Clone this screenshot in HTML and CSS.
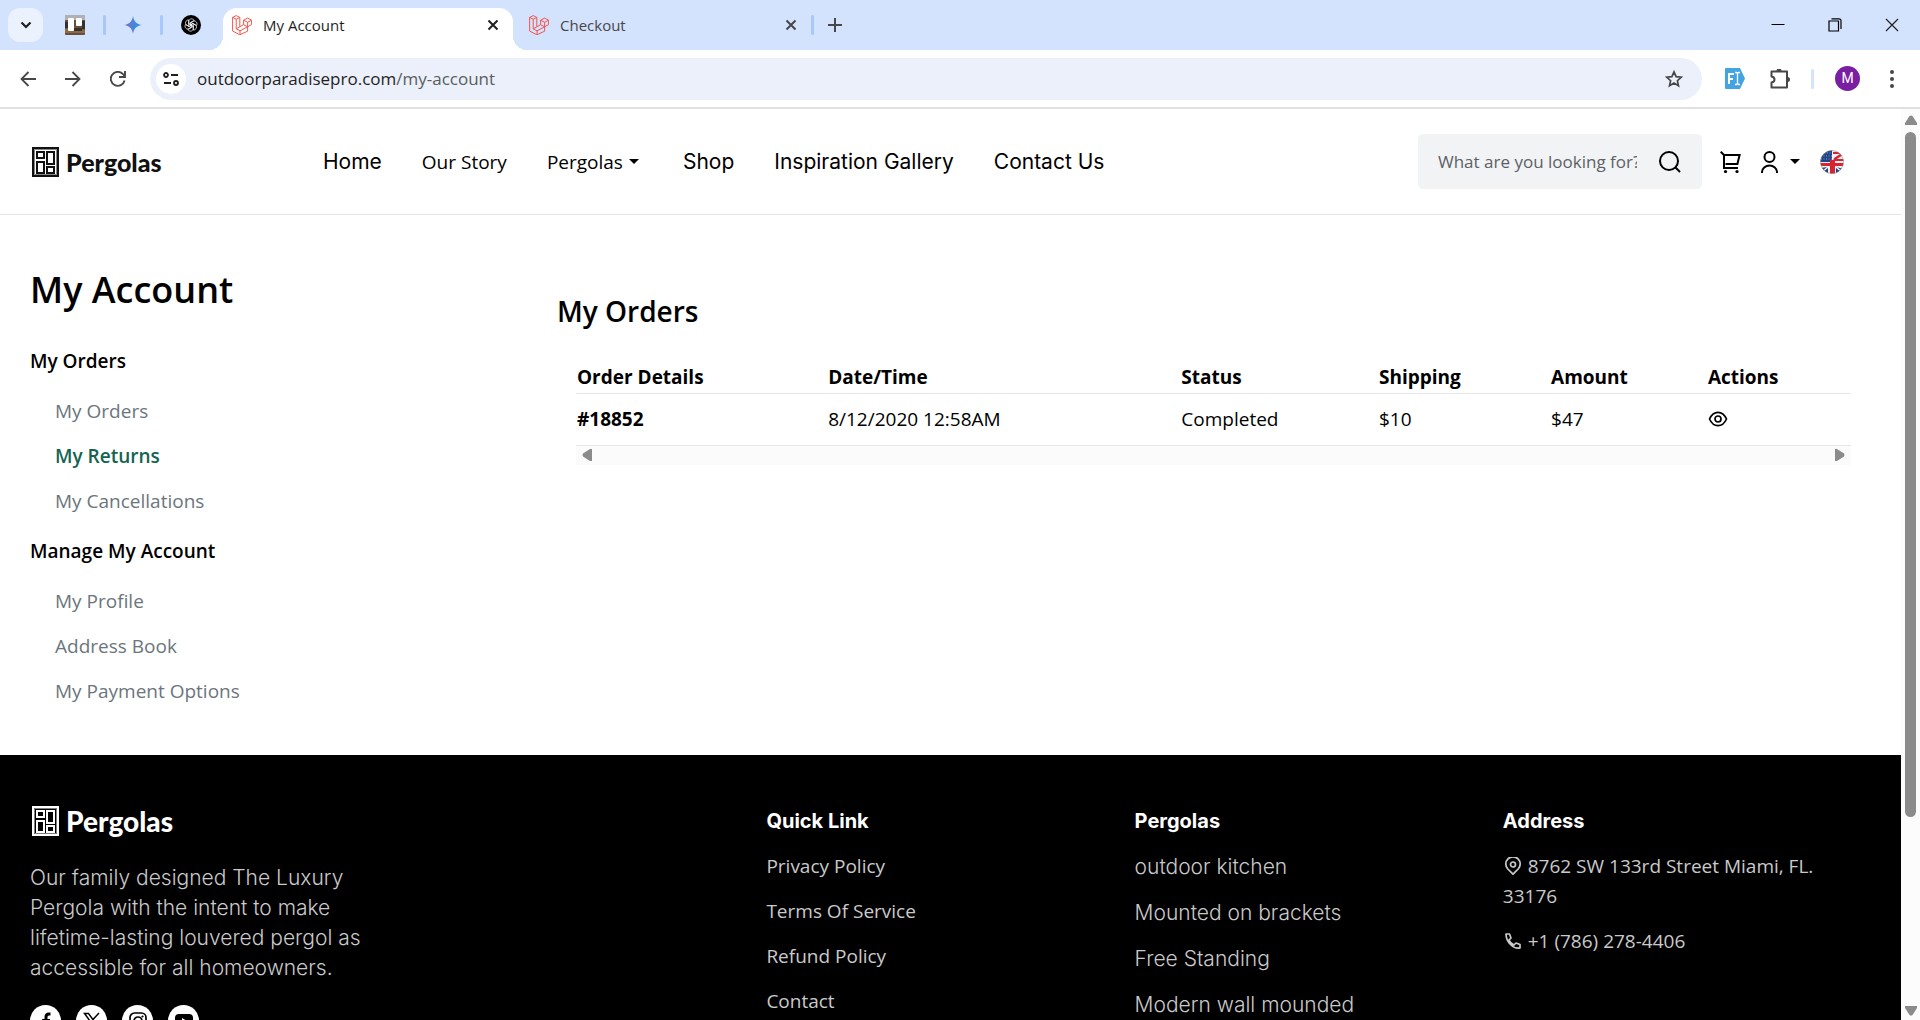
FILE: index.html
```html
<!DOCTYPE html>
<html lang="en">
<head>
    <meta charset="UTF-8">
    <title>My Account</title>
    <meta name="viewport" content="width=device-width, initial-scale=1.0">
    <link rel="stylesheet" href="styles.css">
</head>
<body>
    <!-- shared icon shapes -->
    <svg class="sprite" aria-hidden="true">
        <symbol id="laravel" viewBox="0 0 20 20">
            <path fill="none" stroke="#f5554c" stroke-width="1" stroke-linejoin="round" d="M.6 2.4 4.2.6l3.6 1.8v9.4l3.8-2.1V5.2l4-2.1 4 2.1v4.4l-4 2.2v4.4l-7.8 3.6L.6 16zM.6 2.4l3.6 1.8 3.6-1.8M4.2 4.2v9.6l3.6-2M4.2 13.8l3.8 2 7.6-4M8 15.8v4M11.6 5.2l4 2.1 4-2.1M15.6 7.3v4.5M11.6 9.7l4 2.1"/>
        </symbol>
        <symbol id="close" viewBox="0 0 12 12">
            <path fill="none" stroke="currentColor" stroke-width="2" d="m1.5 1.5 9 9m0-9-9 9"/>
        </symbol>
        <symbol id="pergola" viewBox="0 0 27 30">
            <path fill="none" stroke="currentColor" stroke-width="2" d="M1 1h25v28H1zM5 5h7v6H5zM15 5h7v12h-7zM5 15h7v11H5zM15 20h7v6h-7z"/>
            <path fill="none" stroke="currentColor" opacity=".5" d="M2.5 2.5h22v25h-22z"/>
        </symbol>
    </svg>

    <div class="tab-strip">
        <button class="tab-search" aria-label="Search tabs">
            <svg width="12" height="8" viewBox="0 0 12 8"><path fill="none" stroke="#1f1f1f" stroke-width="2.2" d="m1.5 1.5 4.500 4.500 4.500-4.500"/></svg>
        </button>
        <div class="pinned">
            <svg width="20" height="20" viewBox="0 0 20 20">
                <rect width="20" height="20" rx="1" fill="#64503c"/>
                <path fill="#aeb0b3" d="M0 0h20v5H0z"/>
                <path fill="#8d6a42" d="M0 14l8-2 12 3v3H0z"/>
                <path fill="#33302e" d="M0 7h3v6H0zM17 6h3v8h-3zM9 13h8v3H9z"/>
                <rect x="3" y="3" width="6" height="13" rx="1" fill="#fff"/>
                <rect x="11" y="3" width="6" height="8" rx="1" fill="#fff"/>
            </svg>
            <span class="divider"></span>
            <svg width="18" height="18" viewBox="0 0 18 18">
                <defs><linearGradient id="spark"><stop offset="0" stop-color="#9168c0"/><stop offset=".5" stop-color="#4b83d6"/><stop offset="1" stop-color="#1ba1e3"/></linearGradient></defs>
                <path fill="url(#spark)" d="M9 0c.6 5.2 3.8 8.4 9 9-5.2.6-8.4 3.8-9 9-.6-5.2-3.8-8.4-9-9 5.2-.6 8.4-3.8 9-9z"/>
            </svg>
            <span class="divider"></span>
            <svg width="20" height="20" viewBox="0 0 20 20">
                <circle cx="10" cy="10" r="10" fill="#000"/>
                <g fill="none" stroke="#fff" stroke-width="0.7">
                    <path id="petal" d="M7.800 11.400V6.600c0-3.200 4-3.600 5.400-1.200L9.500 7.600v3.400"/>
                    <use href="#petal" transform="rotate(60 10 10)"/>
                    <use href="#petal" transform="rotate(120 10 10)"/>
                    <use href="#petal" transform="rotate(180 10 10)"/>
                    <use href="#petal" transform="rotate(240 10 10)"/>
                    <use href="#petal" transform="rotate(300 10 10)"/>
                </g>
            </svg>
        </div>
        <div class="tab active">
            <svg width="20" height="20"><use href="#laravel"/></svg>
            <span>My Account</span>
            <button aria-label="Close tab"><svg width="12" height="12"><use href="#close"/></svg></button>
        </div>
        <div class="tab">
            <svg width="20" height="20"><use href="#laravel"/></svg>
            <span>Checkout</span>
            <button aria-label="Close tab"><svg width="12" height="12"><use href="#close"/></svg></button>
        </div>
        <span class="divider"></span>
        <button class="new-tab" aria-label="New tab">
            <svg width="14" height="14" viewBox="0 0 14 14"><path stroke="#474747" stroke-width="2" d="M7 0v14M0 7h14"/></svg>
        </button>
        <div class="window-buttons">
            <button aria-label="Minimize"><svg width="14" height="14" viewBox="0 0 14 14"><path stroke="#000" d="M.5 6.500h13"/></svg></button>
            <button aria-label="Restore"><svg width="14" height="14" viewBox="0 0 14 14"><path fill="none" stroke="#000" stroke-width="1.2" d="M1 3h9.500v10H1zM3.500.8H11q2 0 2 2V11"/></svg></button>
            <button aria-label="Close"><svg width="14" height="14" viewBox="0 0 14 14"><path stroke="#222" stroke-width="1.2" d="m1 1 12 12m0-12L1 13"/></svg></button>
        </div>
    </div>

    <div class="toolbar">
        <div class="history">
            <button aria-label="Back"><svg width="16" height="16" viewBox="0 0 16 16"><path fill="none" stroke="#474747" stroke-width="1.8" d="M16 8H2M8.500 1 1.500 8l7 7"/></svg></button>
            <button aria-label="Forward"><svg width="16" height="16" viewBox="0 0 16 16"><path fill="none" stroke="#474747" stroke-width="1.8" d="M0 8h14M7.500 1l7 7-7 7"/></svg></button>
            <button aria-label="Reload"><svg width="16" height="16" viewBox="0 0 16 16"><path fill="none" stroke="#474747" stroke-width="1.9" d="M14.600 9.500A7 7 0 1 1 13 3.200L14.800 5M15 0v6H9"/></svg></button>
        </div>
        <div class="address-bar">
            <span class="site-info">
                <svg width="16" height="14" viewBox="0 0 16 14"><g fill="none" stroke="#1f1f1f" stroke-width="1.8"><circle cx="3" cy="3" r="2"/><path d="M8 3h7M1 11h7"/><circle cx="13" cy="11" r="2"/></g></svg>
            </span>
            <span class="url">outdoorparadisepro.com<span>/my-account</span></span>
            <svg width="18" height="18" viewBox="0 0 18 18"><path fill="none" stroke="#474747" stroke-width="1.7" d="m9 1.900 2.100 4.800 5.200.5-3.900 3.500 1.100 5.100L9 13.100l-4.500 2.700 1.100-5.100L1.700 7.200l5.200-.5z"/></svg>
        </div>
        <div class="extensions">
            <svg width="20" height="21" viewBox="0 0 20 21">
                <path fill="#44a4e2" d="M1 0h14l5 10.500L15 21H1q-1 0-1-1V1q0-1 1-1z"/>
                <path fill="none" stroke="#fff" stroke-width="2" d="M4 16V6h5M4 11h4"/>
                <path fill="none" stroke="#fff" stroke-width="1.3" d="M10 4.500h1.500l1 1 1-1H15M12.500 5v11M10 16.500h1.500l1-1 1 1H15"/>
            </svg>
            <svg width="20" height="20" viewBox="0 0 20 20">
                <path fill="none" stroke="#474747" stroke-width="2" stroke-linejoin="round" d="M1.500 2.500h15.500v16H1.500v-5q3-.5 3-3t-3-3z"/>
                <path fill="#474747" d="M6.500 2a2.500 2.500 0 0 1 5 0zM17.500 8a2.500 2.500 0 0 1 0 5z"/>
            </svg>
            <span class="divider"></span>
            <span class="avatar">M</span>
            <svg width="4" height="18" viewBox="0 0 4 18"><g fill="#474747"><circle cx="2" cy="2" r="2"/><circle cx="2" cy="9" r="2"/><circle cx="2" cy="16" r="2"/></g></svg>
        </div>
    </div>

    <div class="viewport">
        <div class="page">
            <header class="site-header">
                <a href="#" class="logo">
                    <svg width="27" height="30"><use href="#pergola"/></svg>
                    <span>Pergolas</span>
                </a>
                <nav>
                    <a href="#" class="geo">Home</a>
                    <a href="#">Our Story</a>
                    <a href="#" class="dropdown">Pergolas</a>
                    <a href="#" class="geo">Shop</a>
                    <a href="#" class="geo">Inspiration Gallery</a>
                    <a href="#" class="geo">Contact Us</a>
                </nav>
                <form class="search">
                    <input type="text" placeholder="What are you looking for?" aria-label="Search products">
                    <button type="button" aria-label="Search">
                        <svg width="22" height="22" viewBox="0 0 22 22"><g fill="none" stroke="#000" stroke-width="2"><circle cx="10" cy="10" r="9"/><path d="m16.500 16.500 4.500 4.500"/></g></svg>
                    </button>
                </form>
                <div class="user-tools">
                    <a href="#" aria-label="Cart">
                        <svg width="21" height="22" viewBox="0 0 21 22"><path fill="none" stroke="#000" stroke-width="2" d="m.7.700 3.300 3.300M4 4h15.600l-2.200 9H5.500M4 3v14h14"/><circle cx="5.500" cy="20.500" r="1.600"/><circle cx="17" cy="20.500" r="1.600"/></svg>
                    </a>
                    <a href="#" class="dropdown" aria-label="Account">
                        <svg width="17" height="22" viewBox="0 0 17 22"><g fill="none" stroke="#000" stroke-width="2"><circle cx="8.500" cy="6" r="5"/><path d="M1 22v-1a7.500 6.500 0 0 1 15 0v1"/></g></svg>
                    </a>
                    <a href="#" class="lang" aria-label="English">
                        <svg width="24" height="24" viewBox="0 0 24 24">
                            <clipPath id="round"><circle cx="12" cy="12" r="11.500"/></clipPath>
                            <g clip-path="url(#round)">
                                <path fill="#f4f2f4" d="M0 0h24v24H0z"/>
                                <path fill="#1f4386" d="M0 0h12v12H0zM0 18l8-1v7H0zM16 17l8 2v5h-8z"/>
                                <path fill="#d7242f" d="M13 2h9v2h-9zM14 8l9-6v3l-6 4h7v2H13zM0 13h24v3H0zM10 10h5v14h-5z"/>
                                <path stroke="#f4f2f4" stroke-width="1.500" d="m1 23 7-6M16 17l7 6"/>
                                <path stroke="#aebfda" stroke-width=".8" stroke-dasharray="1 1.500" d="M2 3h10M1 6h11M1 9h11"/>
                            </g>
                            <circle cx="12" cy="12" r="11.500" fill="none" stroke="#777" opacity=".5"/>
                        </svg>
                    </a>
                </div>
            </header>

            <main>
                <aside>
                    <h1>My Account</h1>
                    <h3>My Orders</h3>
                    <ul>
                        <li><a href="#">My Orders</a></li>
                        <li><a href="#" class="current">My Returns</a></li>
                        <li><a href="#">My Cancellations</a></li>
                    </ul>
                    <h3>Manage My Account</h3>
                    <ul>
                        <li><a href="#">My Profile</a></li>
                        <li><a href="#">Address Book</a></li>
                        <li><a href="#">My Payment Options</a></li>
                    </ul>
                </aside>
                <section class="orders">
                    <h2>My Orders</h2>
                    <div class="table-wrap">
                        <table>
                            <thead>
                                <tr>
                                    <th>Order Details</th>
                                    <th>Date/Time</th>
                                    <th>Status</th>
                                    <th>Shipping</th>
                                    <th>Amount</th>
                                    <th>Actions</th>
                                </tr>
                            </thead>
                            <tbody>
                                <tr>
                                    <td><b>#18852</b></td>
                                    <td>8/12/2020 12:58AM</td>
                                    <td>Completed</td>
                                    <td>$10</td>
                                    <td>$47</td>
                                    <td><a href="#" aria-label="View order"><svg width="20" height="16" viewBox="0 0 20 16"><g fill="none" stroke="#000" stroke-width="1.7"><path d="M1.500 8C3.500 3.500 6.500 1.300 10 1.300S16.500 3.500 18.500 8c-2 4.500-5 6.700-8.500 6.700S3.500 12.500 1.500 8z"/><circle cx="10" cy="8" r="3"/></g></svg></a></td>
                                </tr>
                            </tbody>
                        </table>
                        <div class="h-scroll">
                            <svg width="10" height="12" viewBox="0 0 10 12"><path fill="#8b8b8b" d="M10 0v12H8L1 7.500Q0 6 1 4.500L8 0z"/></svg>
                            <svg width="10" height="12" viewBox="0 0 10 12"><path fill="#8b8b8b" d="M0 0v12h2l7-4.500Q10 6 9 4.500L2 0z"/></svg>
                        </div>
                    </div>
                </section>
            </main>

            <footer>
                <div class="about">
                    <a href="#" class="logo">
                        <svg width="27" height="30"><use href="#pergola"/></svg>
                        <span>Pergolas</span>
                    </a>
                    <p class="geo">Our family designed The Luxury<br>Pergola with the intent to make<br>lifetime-lasting louvered pergol as<br>accessible for all homeowners.</p>
                    <div class="social">
                        <a href="#" aria-label="Facebook"><svg width="18" height="18" viewBox="0 0 18 18"><path fill="none" stroke="#000" stroke-width="3" d="M13.500 2H12q-3 0-3 3v13M5 8.500h8"/></svg></a>
                        <a href="#" aria-label="X"><svg width="18" height="18" viewBox="0 0 18 18"><path fill="none" stroke="#000" stroke-width="1.5" d="M1.500 1.500h4l11 15h-4zM16 1l-6.500 7M7.500 10 2 17"/></svg></a>
                        <a href="#" aria-label="Instagram"><svg width="18" height="18" viewBox="0 0 18 18"><g fill="none" stroke="#000" stroke-width="1.7"><rect x="1" y="1" width="16" height="16" rx="4.500"/><circle cx="9" cy="9" r="4"/></g><circle cx="13.500" cy="4.500" r="1.100"/></svg></a>
                        <a href="#" aria-label="YouTube"><svg width="18" height="16" viewBox="0 0 18 16"><rect y="1" width="18" height="14" rx="4"/><path fill="#fff" d="m7 5 5 3-5 3z"/></svg></a>
                    </div>
                </div>
                <div class="links">
                    <h4>Quick Link</h4>
                    <a href="#">Privacy Policy</a>
                    <a href="#">Terms Of Service</a>
                    <a href="#">Refund Policy</a>
                    <a href="#">Contact</a>
                </div>
                <div class="links geo">
                    <h4>Pergolas</h4>
                    <a href="#">outdoor kitchen</a>
                    <a href="#">Mounted on brackets</a>
                    <a href="#">Free Standing</a>
                    <a href="#">Modern wall mounded</a>
                </div>
                <div class="links">
                    <h4>Address</h4>
                    <a href="#"><svg width="20" height="18" viewBox="0 0 20 18"><g fill="none" stroke="currentColor" stroke-width="1.7"><path d="M10 17.200 4.800 12a7.200 7.200 0 1 1 10.400 0z"/><circle cx="10" cy="7.500" r="2.500"/></g></svg> 8762 SW 133rd Street Miami, FL. 33176</a>
                    <a href="#"><svg width="20" height="18" viewBox="0 0 20 18"><path fill="none" stroke="currentColor" stroke-width="1.7" stroke-linejoin="round" d="M3 2h3.500l1.500 4-2 2q1.500 3.500 5 5l2-2 4 1.500V16q-5 1-9.500-3.500T3 2z"/></svg> +1 (786) 278-4406</a>
                </div>
            </footer>
        </div>
        <div class="v-scroll">
            <svg width="12" height="10" viewBox="0 0 12 10"><path fill="#8b8b8b" d="M0 10V8l4.500-7Q6 0 7.500 1L12 8v2z"/></svg>
            <div class="thumb"></div>
            <svg width="12" height="10" viewBox="0 0 12 10"><path fill="#8b8b8b" d="M0 0v2l4.500 7Q6 10 7.500 9L12 2V0z"/></svg>
        </div>
    </div>
</body>
</html>
```
FILE: styles.css
```css
* {
    margin: 0;
    padding: 0;
    box-sizing: border-box;
}

body {
    display: flex;
    flex-direction: column;
    height: 100vh;
    overflow: hidden;
    background: #fff;
    color: #000;
    font-family: "Open Sans", "Noto Sans", sans-serif;
    font-size: 19px;
    line-height: 30px;
}

a {
    color: inherit;
    text-decoration: none;
}

button {
    border: 0;
    background: none;
    color: inherit;
    font: inherit;
    cursor: pointer;
}

svg {
    display: block;
    flex-shrink: 0;
}

ul {
    list-style: none;
}

.sprite {
    position: absolute;
    width: 0;
    height: 0;
}

.geo {
    font-family: Inter, "Open Sans", sans-serif;
    font-size: 21px;
}

/* browser tabs */
.tab-strip {
    display: flex;
    align-items: center;
    height: 50px;
    flex-shrink: 0;
    padding-left: 8px;
    background: #d3e2fd;
    font-size: 15px;
}

.tab-search {
    display: grid;
    place-items: center;
    width: 35px;
    height: 34px;
    border-radius: 12px;
    background: #ebf2fe;
}

.divider {
    width: 3px;
    height: 20px;
    border-radius: 2px;
    background: #a8c7fa;
}

.pinned {
    display: flex;
    align-items: center;
    gap: 18px;
    padding: 0 22px;
}

.tab {
    display: flex;
    align-items: center;
    gap: 11px;
    width: 298px;
    height: 42px;
    padding: 0 12px 0 16px;
    color: #474747;
}

.tab span {
    flex: 1;
}

.tab button {
    padding: 2px;
}

.tab.active {
    position: relative;
    align-self: flex-end;
    width: 290px;
    padding-left: 9px;
    padding-bottom: 8px;
    border-radius: 14px 14px 0 0;
    background: #fff;
    color: #1f1f1f;
}

.tab.active::before,
.tab.active::after {
    content: "";
    position: absolute;
    bottom: 0;
    width: 14px;
    height: 14px;
}

.tab.active::before {
    right: 100%;
    background: radial-gradient(circle at 0 0, transparent 14px, #fff 14px);
}

.tab.active::after {
    left: 100%;
    background: radial-gradient(circle at 100% 0, transparent 14px, #fff 14px);
}

.new-tab {
    padding: 14px;
}

.window-buttons {
    display: flex;
    margin-left: auto;
}

.window-buttons button {
    display: grid;
    place-items: center;
    width: 57px;
    height: 48px;
}

/* address bar */
.toolbar {
    display: flex;
    align-items: center;
    flex-shrink: 0;
    height: 59px;
    padding: 0 26px 0 20px;
    border-bottom: 2px solid #e0e0e0;
    background: #fff;
}

.history {
    display: flex;
    gap: 29px;
    padding-right: 24px;
}

.address-bar {
    display: flex;
    align-items: center;
    flex: 1;
    height: 42px;
    padding: 0 19px 0 6px;
    border-radius: 21px;
    background: #ebf0fa;
    font-size: 17px;
}

.site-info {
    display: grid;
    place-items: center;
    width: 30px;
    height: 30px;
    border-radius: 50%;
    background: #fff;
}

.url {
    flex: 1;
    padding-left: 11px;
    color: #1f1f1f;
}

.url span {
    color: #5a5d60;
}

.extensions {
    display: flex;
    align-items: center;
    gap: 21px;
    padding-left: 23px;
}

.extensions svg:first-child {
    margin-right: 4px;
}

.extensions .divider {
    background: #d3e2fd;
}

.avatar {
    width: 25px;
    height: 25px;
    margin-right: 9px;
    border-radius: 50%;
    background: #7b1fa2;
    color: #fff;
    font-family: Roboto, sans-serif;
    font-size: 14px;
    line-height: 25px;
    text-align: center;
}

.viewport {
    display: flex;
    flex: 1;
    min-height: 0;
}

.page {
    flex: 1;
    overflow: hidden;
}

.v-scroll {
    display: flex;
    flex-direction: column;
    align-items: center;
    gap: 7px;
    width: 19px;
    padding: 6px 0 4px;
    background: #fcfcfc;
}

.v-scroll .thumb {
    width: 11px;
    height: 76%;
    border-radius: 6px;
    background: #8b8b8b;
}

.v-scroll svg:last-child {
    margin-top: auto;
}

/* site header */
.site-header {
    display: flex;
    align-items: center;
    height: 106px;
    padding: 0 57px 0 32px;
    border-bottom: 1px solid #e5e5e5;
}

.logo {
    display: flex;
    align-items: center;
    gap: 7px;
    font-family: Lato, sans-serif;
    font-size: 25px;
    font-weight: 900;
    color: #111;
}

.site-header .logo {
    width: 291px;
}

.site-header nav {
    display: flex;
    gap: 40px;
    white-space: nowrap;
}

.dropdown {
    display: flex;
    align-items: center;
    gap: 6px;
}

.dropdown::after {
    content: "";
    border: 5px solid transparent;
    border-top-color: #000;
    border-bottom: 0;
}

nav .dropdown {
    padding-right: 4px;
}

.search {
    display: flex;
    align-items: center;
    width: 284px;
    height: 55px;
    margin-left: auto;
    padding: 0 21px 0 20px;
    border-radius: 5px;
    background: #f1f3f5;
}

.search input {
    flex: 1;
    min-width: 0;
    margin-right: 22px;
    border: 0;
    outline: 0;
    background: none;
    font: inherit;
    font-size: 17px;
}

.search input::placeholder {
    color: #5c6166;
}

.user-tools {
    display: flex;
    align-items: center;
    gap: 20px;
    padding-left: 18px;
}

.user-tools .dropdown {
    gap: 12px;
}

/* account */
main {
    display: flex;
    padding: 50px 50px 34px 30px;
}

aside {
    width: 527px;
    flex-shrink: 0;
}

h1 {
    margin-bottom: 31px;
    font-size: 36px;
    font-weight: 600;
    line-height: 50px;
}

h2 {
    font-size: 28px;
    font-weight: 600;
    line-height: 36px;
}

h3 {
    margin-bottom: 20px;
    font-size: 19px;
    font-weight: 600;
}

aside ul {
    padding-left: 25px;
    color: #6c757d;
}

aside li {
    margin-bottom: 15px;
}

aside ul + h3 {
    margin-top: 20px;
}

.current {
    color: #146350;
    font-weight: 600;
}

.orders {
    flex: 1;
    padding-top: 28px;
}

.table-wrap {
    margin: 32px 0 0 19px;
}

table {
    width: 100%;
    border-collapse: collapse;
    table-layout: fixed;
}

th,
td {
    padding: 0 1px;
    border-bottom: 1px solid #e5e6e7;
    text-align: left;
}

th {
    height: 32px;
}

td {
    height: 52px;
}

th:nth-child(1) { width: 19.7%; }
th:nth-child(2) { width: 27.7%; }
th:nth-child(3) { width: 15.5%; }
th:nth-child(4) { width: 13.5%; }
th:nth-child(5) { width: 12.3%; }

.h-scroll {
    display: flex;
    align-items: center;
    justify-content: space-between;
    height: 19px;
    padding: 0 6px;
    background: #fbfbfb;
}

/* footer */
footer {
    display: grid;
    grid-template-columns: 2fr 1fr 1fr 1fr;
    padding: 51px 30px;
    background: #000;
    color: #c9cacb;
}

footer .logo {
    margin-left: 2px;
    font-size: 28px;
    color: #fff;
}

footer p {
    margin: 27px 0 22px;
    font-weight: 300;
}

.social {
    display: flex;
    gap: 15px;
}

.social a {
    display: grid;
    place-items: center;
    width: 31px;
    height: 31px;
    border-radius: 50%;
    background: #fff;
}

.links {
    display: flex;
    flex-direction: column;
    gap: 15px;
}

.links.geo {
    gap: 16px;
    font-weight: 300;
}

.links h4 {
    color: #fff;
    font-family: Inter, "Open Sans", sans-serif;
    font-size: 20px;
    font-weight: 700;
}

.links svg {
    display: inline-block;
    vertical-align: -2px;
}
```
